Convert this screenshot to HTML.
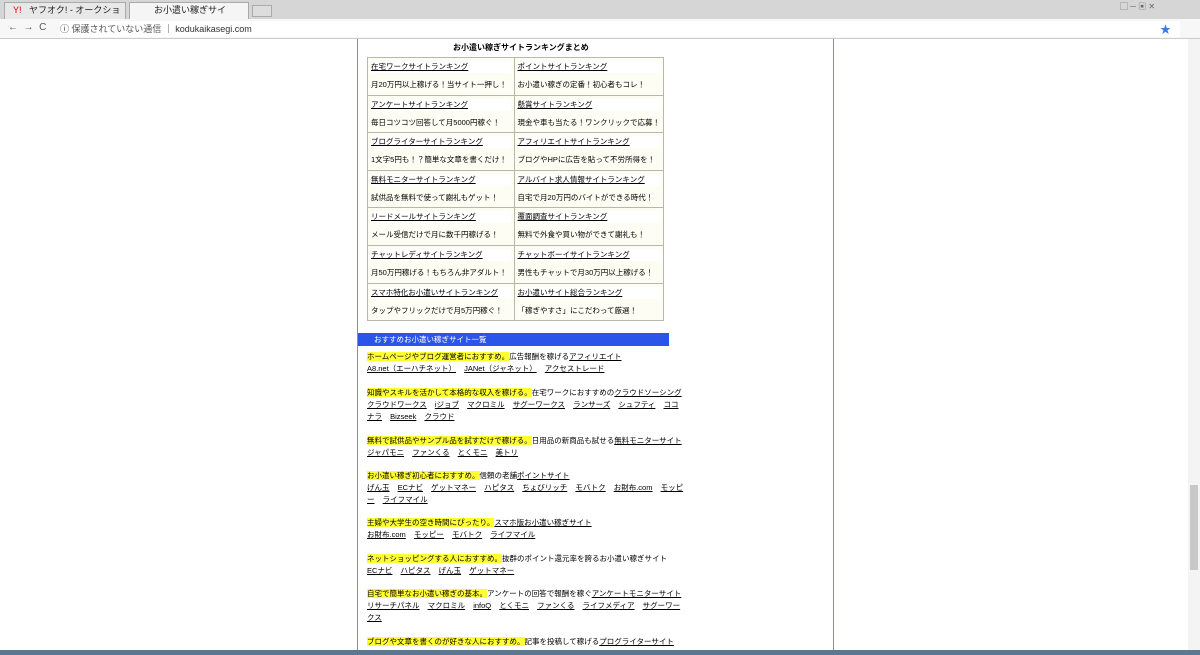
<!DOCTYPE html>
<html><head><meta charset="utf-8"><style>
*{margin:0;padding:0;box-sizing:border-box}
body{width:1200px;height:655px;overflow:hidden;background:#fff;font-family:"Liberation Sans","Noto Sans CJK JP",sans-serif;position:relative;color:#000}
.abs{position:absolute}
#tabs{left:0;top:0;width:1200px;height:19px;background:#d6d6d6}
.tab{top:2px;height:17px;background:#e8e8e8;border:1px solid #aaa;border-bottom:none;font-size:9px;line-height:15px;padding-left:24px;color:#222}
#addr{left:0;top:19px;width:1200px;height:20px;background:#f7f7f7;border-bottom:1px solid #ccc}
#omni{left:60px;top:21px;width:1120px;height:16px;background:#fff;font-size:9px;line-height:16px;color:#333}
.page{left:357px;top:39px;width:477px;height:612px;border-left:1px solid #8888bb;border-right:1px solid #8888bb}
.t{font-size:7.5px;line-height:12px;white-space:nowrap}
u{text-decoration:underline}
.hl{background:#ffff33}
table{position:absolute;left:367px;top:57px;width:297px;border-collapse:collapse;}
td{border:1px solid #b8b8a8;width:50%;height:37.6px;padding:0 3px;font-size:7.5px;line-height:12px;vertical-align:top;background:#fdfdf4;white-space:nowrap}
td div:first-child{margin-top:3px;background:#fff}
td div+div{margin-top:6px}
.sec{left:367px;width:340px;font-size:7.5px;line-height:12px;white-space:nowrap}
.sec u{margin-right:6px}
</style></head><body>
<div id="tabs" class="abs"></div>
<div class="abs tab" style="left:4px;width:122px"><span style="color:#d00;position:absolute;left:8px">Y!</span>ヤフオク! - オークショ ×</div>
<div class="abs tab" style="left:129px;width:120px;background:#f5f5f5">お小遣い稼ぎサイト.com ×</div>
<div class="abs" style="left:252px;top:5px;width:20px;height:12px;border:1px solid #aaa;background:#ddd"></div>
<div class="abs" style="left:1120px;top:1px;width:75px;height:12px;font-size:8px;color:#666">▢ ─ ▣ ✕</div>
<div id="addr" class="abs"></div>
<div class="abs" style="left:8px;top:22px;font-size:10px;color:#555">←&nbsp;&nbsp;→&nbsp;&nbsp;C</div>
<div id="omni" class="abs">ⓘ <span style="color:#555">保護されていない通信</span> ｜ kodukaikasegi.com</div>
<div class="abs" style="left:1160px;top:21px;font-size:11px;color:#3b7be8">★</div>
<div class="abs page"></div>
<div class="abs t" style="left:453px;top:42px;font-weight:bold;font-size:8px">お小遣い稼ぎサイトランキングまとめ</div>
<table>
<tr><td><div><u>在宅ワークサイトランキング</u></div><div>月20万円以上稼げる！当サイト一押し！</div></td><td><div><u>ポイントサイトランキング</u></div><div>お小遣い稼ぎの定番！初心者もコレ！</div></td></tr>
<tr><td><div><u>アンケートサイトランキング</u></div><div>毎日コツコツ回答して月5000円稼ぐ！</div></td><td><div><u>懸賞サイトランキング</u></div><div>現金や車も当たる！ワンクリックで応募！</div></td></tr>
<tr><td><div><u>ブログライターサイトランキング</u></div><div>1文字5円も！？簡単な文章を書くだけ！</div></td><td><div><u>アフィリエイトサイトランキング</u></div><div>ブログやHPに広告を貼って不労所得を！</div></td></tr>
<tr><td><div><u>無料モニターサイトランキング</u></div><div>試供品を無料で使って謝礼もゲット！</div></td><td><div><u>アルバイト求人情報サイトランキング</u></div><div>自宅で月20万円のバイトができる時代！</div></td></tr>
<tr><td><div><u>リードメールサイトランキング</u></div><div>メール受信だけで月に数千円稼げる！</div></td><td><div><u>覆面調査サイトランキング</u></div><div>無料で外食や買い物ができて謝礼も！</div></td></tr>
<tr><td><div><u>チャットレディサイトランキング</u></div><div>月50万円稼げる！もちろん非アダルト！</div></td><td><div><u>チャットボーイサイトランキング</u></div><div>男性もチャットで月30万円以上稼げる！</div></td></tr>
<tr><td><div><u>スマホ特化お小遣いサイトランキング</u></div><div>タップやフリックだけで月5万円稼ぐ！</div></td><td><div><u>お小遣いサイト総合ランキング</u></div><div>「稼ぎやすさ」にこだわって厳選！</div></td></tr>
</table>
<div class="abs" style="left:358px;top:333px;width:311px;height:13px;background:#2a55e8;color:#fff;font-size:7.5px;line-height:13px;padding-left:16px">おすすめお小遣い稼ぎサイト一覧</div>
<div class="abs sec" style="top:351px"><span class="hl">ホームページやブログ運営者におすすめ。</span>広告報酬を稼げる<u>アフィリエイト</u><br><u>A8.net（エーハチネット）</u> <u>JANet（ジャネット）</u> <u>アクセストレード</u></div>
<div class="abs sec" style="top:387px"><span class="hl">知識やスキルを活かして本格的な収入を稼げる。</span>在宅ワークにおすすめの<u>クラウドソーシング</u><br><u>クラウドワークス</u> <u>iジョブ</u> <u>マクロミル</u> <u>サグーワークス</u> <u>ランサーズ</u> <u>シュフティ</u> <u>ココ</u><br><u>ナラ</u> <u>Bizseek</u> <u>クラウド</u></div>
<div class="abs sec" style="top:435px"><span class="hl">無料で試供品やサンプル品を試すだけで稼げる。</span>日用品の新商品も試せる<u>無料モニターサイト</u><br><u>ジャパモニ</u> <u>ファンくる</u> <u>とくモニ</u> <u>美トリ</u></div>
<div class="abs sec" style="top:470px"><span class="hl">お小遣い稼ぎ初心者におすすめ。</span>信頼の老舗<u>ポイントサイト</u><br><u>げん玉</u> <u>ECナビ</u> <u>ゲットマネー</u> <u>ハピタス</u> <u>ちょびリッチ</u> <u>モバトク</u> <u>お財布.com</u> <u>モッピ</u><br><u>ー</u> <u>ライフマイル</u></div>
<div class="abs sec" style="top:517px"><span class="hl">主婦や大学生の空き時間にぴったり。</span><u>スマホ版お小遣い稼ぎサイト</u><br><u>お財布.com</u> <u>モッピー</u> <u>モバトク</u> <u>ライフマイル</u></div>
<div class="abs sec" style="top:553px"><span class="hl">ネットショッピングする人におすすめ。</span>抜群のポイント還元率を誇るお小遣い稼ぎサイト<br><u>ECナビ</u> <u>ハピタス</u> <u>げん玉</u> <u>ゲットマネー</u></div>
<div class="abs sec" style="top:588px"><span class="hl">自宅で簡単なお小遣い稼ぎの基本。</span>アンケートの回答で報酬を稼ぐ<u>アンケートモニターサイト</u><br><u>リサーチパネル</u> <u>マクロミル</u> <u>infoQ</u> <u>とくモニ</u> <u>ファンくる</u> <u>ライフメディア</u> <u>サグーワー</u><br><u>クス</u></div>
<div class="abs sec" style="top:636px"><span class="hl">ブログや文章を書くのが好きな人におすすめ。</span>記事を投稿して稼げる<u>プログライターサイト</u></div>
<div class="abs" style="left:1188px;top:39px;width:12px;height:612px;background:#f4f4f4"></div>
<div class="abs" style="left:1190px;top:485px;width:8px;height:85px;background:#c8c8c8"></div>
<div class="abs" style="left:0;top:650px;width:1200px;height:5px;background:#5a7894"></div>
</body></html>
